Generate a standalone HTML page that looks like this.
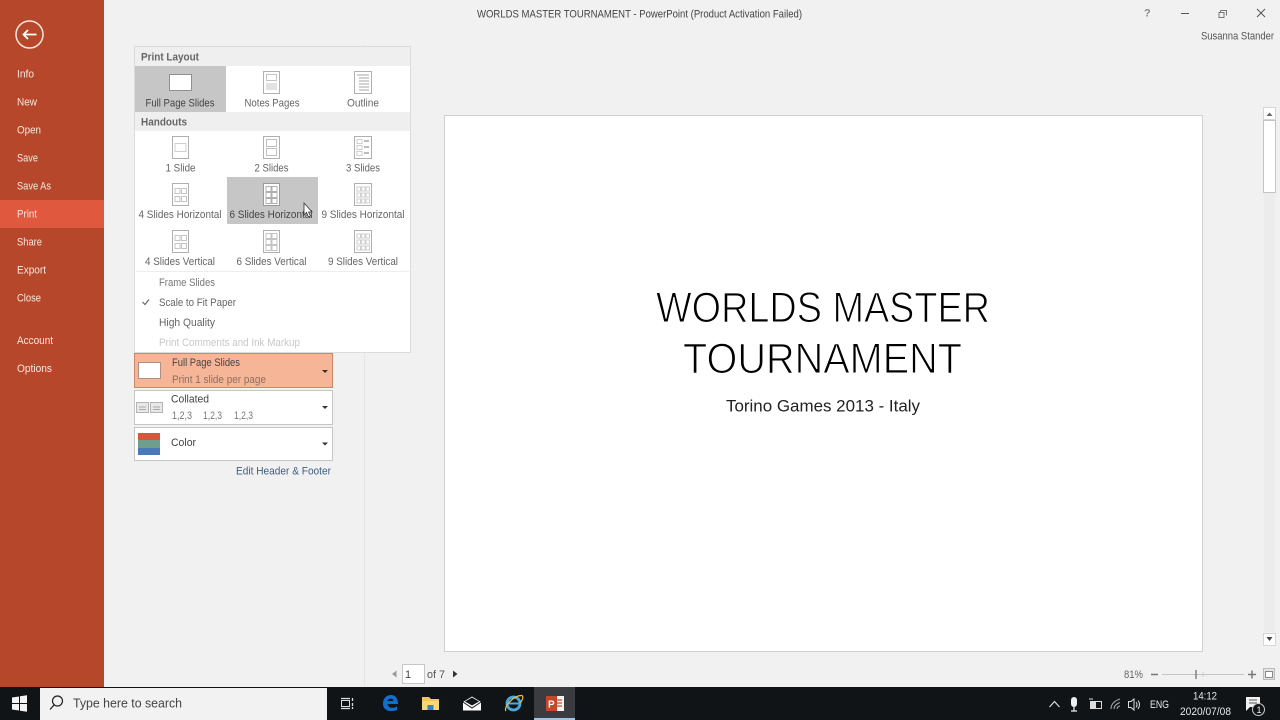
<!DOCTYPE html>
<html><head><meta charset="utf-8"><title>PowerPoint Print</title>
<style>
html,body{margin:0;padding:0;width:1280px;height:720px;overflow:hidden;background:#f1f1f1}
svg{display:block;position:absolute;left:0;top:0;filter:blur(.3px)}
text{font-family:"Liberation Sans",sans-serif;white-space:pre}
.m text{fill:#fbe6df;font-size:11px}
.g text{fill:#666;font-size:11px;text-anchor:middle}
.i rect,.i path{fill:none;stroke:#b0b0b0;stroke-width:1}
.i .w{fill:#fff}
</style></head>
<body>
<svg width="1280" height="720" viewBox="0 0 1280 720" xmlns="http://www.w3.org/2000/svg">
<rect width="1280" height="720" fill="#f1f1f1"/>
<!-- sidebar -->
<rect x="0" y="0" width="104" height="687" fill="#b7472a"/>
<rect x="0" y="200" width="104" height="28" fill="#e0593f"/>
<circle cx="29.500" cy="34.500" r="13.500" fill="none" stroke="#fbe6df" stroke-width="1.500"/>
<path d="M36.500 34.500H23.500M28 30L23.500 34.500L28 39" fill="none" stroke="#fff" stroke-width="1.800"/>
<g class="m">
<text x="17" y="77.500" textLength="17" lengthAdjust="spacingAndGlyphs">Info</text>
<text x="17" y="105.500" textLength="20" lengthAdjust="spacingAndGlyphs">New</text>
<text x="17" y="133.500" textLength="24" lengthAdjust="spacingAndGlyphs">Open</text>
<text x="17" y="161.500" textLength="21" lengthAdjust="spacingAndGlyphs">Save</text>
<text x="17" y="189.500" textLength="34" lengthAdjust="spacingAndGlyphs">Save As</text>
<text x="17" y="217.500" textLength="20" lengthAdjust="spacingAndGlyphs">Print</text>
<text x="17" y="245.500" textLength="25" lengthAdjust="spacingAndGlyphs">Share</text>
<text x="17" y="273.500" textLength="29" lengthAdjust="spacingAndGlyphs">Export</text>
<text x="17" y="301.500" textLength="24" lengthAdjust="spacingAndGlyphs">Close</text>
<text x="17" y="344" textLength="36" lengthAdjust="spacingAndGlyphs">Account</text>
<text x="17" y="372" textLength="35" lengthAdjust="spacingAndGlyphs">Options</text>
</g>
<!-- title bar -->
<text x="477" y="17.500" font-size="11" fill="#444" textLength="325" lengthAdjust="spacingAndGlyphs">WORLDS MASTER TOURNAMENT - PowerPoint (Product Activation Failed)</text>
<text x="1144" y="16.500" font-size="11" font-weight="bold" fill="#888">?</text>
<path d="M1181 13.500H1189" stroke="#555" stroke-width="1"/>
<path d="M1220.500 10.500H1226.500V15.500M1220.500 10.500V12.500M1219 12.500H1224V17.500H1219V12.500Z" fill="none" stroke="#777" stroke-width="1"/>
<path d="M1257 9L1265 17M1265 9L1257 17" stroke="#555" stroke-width="1"/>
<text x="1201" y="39.500" font-size="11" fill="#555" textLength="73" lengthAdjust="spacingAndGlyphs">Susanna Stander</text>
<!-- divider -->
<rect x="364" y="45" width="1" height="642" fill="#e6e6e6"/>
<!-- slide -->
<rect x="444.500" y="115.500" width="758" height="536" fill="#fff" stroke="#d0d0d0"/>
<g fill="#000" stroke="#fff" stroke-width="1.100">
<text x="656" y="322" font-size="43" textLength="334" lengthAdjust="spacingAndGlyphs">WORLDS MASTER</text>
<text x="683" y="373" font-size="43" textLength="279" lengthAdjust="spacingAndGlyphs">TOURNAMENT</text>
</g>
<text x="726" y="411.500" font-size="16.500" fill="#222" textLength="194" lengthAdjust="spacingAndGlyphs">Torino Games 2013 - Italy</text>
<!-- scrollbar -->
<rect x="1263.500" y="107.500" width="12" height="12" fill="#fff" stroke="#d6d6d6"/>
<path d="M1266.500 116L1269.500 112.500L1272.500 116Z" fill="#666"/>
<rect x="1264" y="193" width="11" height="439" fill="#ececec"/>
<rect x="1263.500" y="120.500" width="12" height="72" fill="#fff" stroke="#c4c4c4"/>
<rect x="1263.500" y="633.500" width="12" height="12" fill="#fff" stroke="#d6d6d6"/>
<path d="M1266.500 637L1269.500 641L1272.500 637Z" fill="#444"/>
<!-- print setting rows -->
<rect x="134.500" y="353.500" width="198" height="34" fill="#f6b597" stroke="#d1866a"/>
<rect x="138.500" y="362.500" width="22" height="16" fill="#fff" stroke="#b09080"/>
<text x="172" y="366" font-size="11" fill="#444" textLength="68" lengthAdjust="spacingAndGlyphs">Full Page Slides</text>
<text x="172" y="383" font-size="11" fill="#8c6f62" textLength="94" lengthAdjust="spacingAndGlyphs">Print 1 slide per page</text>
<path d="M322 370H328L325 373Z" fill="#333"/>
<rect x="134.500" y="390.500" width="198" height="34" fill="#fff" stroke="#c6c6c6"/>
<g fill="#e8e8e8" stroke="#b4b4b4" stroke-width="1"><rect x="136.500" y="402.500" width="12" height="10"/><rect x="150.500" y="402.500" width="12" height="10"/></g>
<path d="M139 407H146M139 409.500H146M153 407H160M153 409.500H160" stroke="#aaa"/>
<text x="171" y="402.500" font-size="11" fill="#444" textLength="38" lengthAdjust="spacingAndGlyphs">Collated</text>
<text x="172" y="419" font-size="11" fill="#777" textLength="20" lengthAdjust="spacingAndGlyphs">1,2,3</text>
<text x="203" y="419" font-size="11" fill="#777" textLength="19" lengthAdjust="spacingAndGlyphs">1,2,3</text>
<text x="234" y="419" font-size="11" fill="#777" textLength="19" lengthAdjust="spacingAndGlyphs">1,2,3</text>
<path d="M322 406H328L325 409Z" fill="#333"/>
<rect x="134.500" y="427.500" width="198" height="33" fill="#fff" stroke="#c6c6c6"/>
<rect x="138" y="433" width="22" height="7" fill="#d4583c"/><rect x="138" y="440" width="22" height="8" fill="#6f9f8c"/><rect x="138" y="448" width="22" height="7" fill="#4a78b8"/>
<text x="171" y="446" font-size="11" fill="#444" textLength="25" lengthAdjust="spacingAndGlyphs">Color</text>
<path d="M322 442.500H328L325 445.500Z" fill="#333"/>
<text x="236" y="474.500" font-size="11" fill="#3f5f86" textLength="95" lengthAdjust="spacingAndGlyphs">Edit Header &amp; Footer</text>
<!-- popup -->
<rect x="134.500" y="46.500" width="276" height="306" fill="#fff" stroke="#dcdcdc"/>
<rect x="135" y="47" width="275" height="19" fill="#efefef"/>
<rect x="135" y="112" width="275" height="19" fill="#efefef"/>
<text x="141" y="60.500" font-size="11" font-weight="bold" fill="#666" textLength="58" lengthAdjust="spacingAndGlyphs">Print Layout</text>
<text x="141" y="125.500" font-size="11" font-weight="bold" fill="#666" textLength="46" lengthAdjust="spacingAndGlyphs">Handouts</text>
<rect x="135" y="66" width="91" height="46" fill="#c6c6c6"/>
<rect x="227" y="177" width="91" height="47" fill="#c6c6c6"/>
<g class="i">
<rect class="w" x="169.500" y="74.500" width="22" height="16" style="stroke:#909090"/>
<rect class="w" x="263.500" y="71.500" width="16" height="22"/><rect x="266.500" y="74.500" width="10" height="6" style="stroke:#c4c4c4"/><rect x="266.500" y="83.500" width="10" height="6" style="fill:#e2e2e2;stroke:#e2e2e2"/>
<rect class="w" x="354.500" y="71.500" width="17" height="22"/><path d="M357 75H369M359 78H369M359 81H369M359 84H369M359 87H369M359 90H369" style="stroke:#a4a4a4"/>
<rect class="w" x="172.500" y="136.500" width="16" height="22"/><rect x="175" y="143.500" width="11" height="8" style="stroke:#cfcfcf"/>
<rect class="w" x="263.500" y="136.500" width="16" height="22"/><rect x="266.500" y="139.500" width="10" height="7" style="stroke:#c0c0c0"/><rect x="266.500" y="148.500" width="10" height="7" style="stroke:#c0c0c0"/>
<rect class="w" x="354.500" y="136.500" width="17" height="22"/><path d="M357 139.500h5v4h-5zM357 145.500h5v4h-5zM357 151.500h5v4h-5z" style="stroke:#cfcfcf"/><path d="M364 141H369M364 147H369M364 153H369" style="stroke:#bbb;stroke-width:2"/>
<rect class="w" x="172.500" y="183.500" width="16" height="22"/><path d="M175 188.500h5v5h-5zM181.500 188.500h5v5h-5zM175 196.500h5v5h-5zM181.500 196.500h5v5h-5z" style="stroke:#c4c4c4"/>
<rect class="w" x="263.500" y="183.500" width="16" height="22" style="stroke:#999"/><path d="M266 186.500h5v5h-5zM272 186.500h5v5h-5zM266 192.500h5v5h-5zM272 192.500h5v5h-5zM266 198.500h5v5h-5zM272 198.500h5v5h-5z" style="stroke:#b0b0b0"/>
<rect class="w" x="354.500" y="183.500" width="17" height="22"/><path d="M357 187h3.500v4H357zM361.500 187h3.500v4h-3.500zM366 187h3.500v4H366zM357 193h3.500v4H357zM361.500 193h3.500v4h-3.500zM366 193h3.500v4H366zM357 199h3.500v4H357zM361.500 199h3.500v4h-3.500zM366 199h3.500v4H366z" style="stroke:#cfcfcf"/>
<rect class="w" x="172.500" y="230.500" width="16" height="22"/><path d="M175 235.500h5v5h-5zM181.500 235.500h5v5h-5zM175 243.500h5v5h-5zM181.500 243.500h5v5h-5z" style="stroke:#c4c4c4"/>
<rect class="w" x="263.500" y="230.500" width="16" height="22"/><path d="M266 233.500h5v5h-5zM272 233.500h5v5h-5zM266 239.500h5v5h-5zM272 239.500h5v5h-5zM266 245.500h5v5h-5zM272 245.500h5v5h-5z" style="stroke:#c4c4c4"/>
<rect class="w" x="354.500" y="230.500" width="17" height="22"/><path d="M357 234h3.500v4H357zM361.500 234h3.500v4h-3.500zM366 234h3.500v4H366zM357 240h3.500v4H357zM361.500 240h3.500v4h-3.500zM366 240h3.500v4H366zM357 246h3.500v4H357zM361.500 246h3.500v4h-3.500zM366 246h3.500v4H366z" style="stroke:#cfcfcf"/>
</g>
<g class="g">
<text x="180" y="106.500" textLength="69" lengthAdjust="spacingAndGlyphs" style="fill:#444">Full Page Slides</text>
<text x="272" y="106.500" textLength="55" lengthAdjust="spacingAndGlyphs">Notes Pages</text>
<text x="363" y="106.500" textLength="32" lengthAdjust="spacingAndGlyphs">Outline</text>
<text x="180.500" y="171.500" textLength="30" lengthAdjust="spacingAndGlyphs">1 Slide</text>
<text x="271.500" y="171.500" textLength="34" lengthAdjust="spacingAndGlyphs">2 Slides</text>
<text x="363" y="171.500" textLength="34" lengthAdjust="spacingAndGlyphs">3 Slides</text>
<text x="180" y="218" textLength="83" lengthAdjust="spacingAndGlyphs">4 Slides Horizontal</text>
<text x="271" y="218" textLength="83" lengthAdjust="spacingAndGlyphs" style="fill:#444">6 Slides Horizontal</text>
<text x="363" y="218" textLength="83" lengthAdjust="spacingAndGlyphs">9 Slides Horizontal</text>
<text x="180" y="265" textLength="70" lengthAdjust="spacingAndGlyphs">4 Slides Vertical</text>
<text x="271.500" y="265" textLength="70" lengthAdjust="spacingAndGlyphs">6 Slides Vertical</text>
<text x="363" y="265" textLength="70" lengthAdjust="spacingAndGlyphs">9 Slides Vertical</text>
</g>
<rect x="136" y="271" width="273" height="1" fill="#eeeeee"/>
<g font-size="11">
<text x="159" y="286" fill="#777" textLength="56" lengthAdjust="spacingAndGlyphs">Frame Slides</text>
<text x="159" y="306" fill="#666" textLength="77" lengthAdjust="spacingAndGlyphs">Scale to Fit Paper</text>
<text x="159" y="326" fill="#666" textLength="56" lengthAdjust="spacingAndGlyphs">High Quality</text>
<text x="159" y="346" fill="#c8c8c8" textLength="141" lengthAdjust="spacingAndGlyphs">Print Comments and Ink Markup</text>
</g>
<path d="M142.500 302L145 304.500L149 299.500" fill="none" stroke="#666" stroke-width="1.200"/>
<!-- cursor -->
<path d="M304 203V215L306.500 212.500L308.500 217L310.500 216L308.500 212H312Z" fill="#fff" stroke="#333" stroke-width=".8"/>
<!-- page nav -->
<path d="M396.500 670.500V677.500L392 674Z" fill="#999"/>
<rect x="402.500" y="664.500" width="22" height="19" fill="#fff" stroke="#c6c6c6"/>
<text x="405" y="678" font-size="11" fill="#444">1</text>
<text x="427" y="678" font-size="11" fill="#555" textLength="18" lengthAdjust="spacingAndGlyphs">of 7</text>
<path d="M453 670.500V677.500L457.500 674Z" fill="#333"/>
<!-- zoom -->
<text x="1124" y="678" font-size="11" fill="#666" textLength="19" lengthAdjust="spacingAndGlyphs">81%</text>
<path d="M1151 674.500H1158" stroke="#777" stroke-width="1.500"/>
<path d="M1162 674.500H1244" stroke="#c4c4c4"/>
<path d="M1196 670V679" stroke="#666" stroke-width="1.200"/>
<path d="M1203 672V677" stroke="#ccc"/>
<path d="M1248 674.500H1256M1252 670.500V678.500" stroke="#777" stroke-width="1.500"/>
<rect x="1263.500" y="668.500" width="11" height="11" fill="#e4e4e4" stroke="#bbb"/>
<rect x="1265.500" y="671.500" width="7" height="6" fill="#fff" stroke="#888"/>
<!-- taskbar -->
<rect x="0" y="687" width="1280" height="33" fill="#111417"/>
<path d="M12 697.500L19 696.500V703H12ZM20 696.300L27 695.300V703H20ZM12 704H19V710.500L12 709.500ZM20 704H27V711.700L20 710.700Z" fill="#f4f4f4"/>
<rect x="40" y="688" width="287" height="32" fill="#f2f2f2"/>
<circle cx="57.500" cy="701" r="5" fill="none" stroke="#222" stroke-width="1.200"/>
<path d="M54 705L50 709.500" stroke="#222" stroke-width="1.300"/>
<text x="73" y="707.500" font-size="13" fill="#444" textLength="109" lengthAdjust="spacingAndGlyphs">Type here to search</text>
<!-- task view -->
<path d="M341 698.500H350M341 708.500H350" stroke="#ddd" stroke-width="1.300"/>
<rect x="341.500" y="700.500" width="8" height="6" fill="none" stroke="#ddd"/>
<path d="M352.500 698V701M352.500 703V706M352.500 707V709" stroke="#ddd" stroke-width="1.300"/>
<!-- edge -->
<path d="M383 704C383 697 388 695 391 695C395 695 398 698 398 704H387.500C388 708 393 709 397 706.500V710C391 712.500 383 711 383 704ZM387.500 701H393.500C393.500 698 388 698 387.500 701Z" fill="#0f6fd0"/>
<!-- folder -->
<path d="M422 697H429L431 699H439V710H422Z" fill="#f3c65c"/>
<rect x="422" y="701" width="17" height="9" fill="#f9d777"/>
<rect x="427.500" y="705" width="6" height="5" fill="#3b82c4"/>
<!-- mail -->
<path d="M463 702L472 696.500L481 702V710.500H463Z" fill="#fff"/>
<path d="M465 701.500L472 705.500L479 701.500L472 697.500Z" fill="#111417"/>
<path d="M463 702L472 708L481 702" fill="none" stroke="#111417" stroke-width="1"/>
<!-- IE -->
<circle cx="513.500" cy="703.500" r="6.500" fill="none" stroke="#4aa7e0" stroke-width="2.800"/>
<path d="M508 703.500H520" stroke="#4aa7e0" stroke-width="2"/>
<path d="M506 711C503 707 514 695 522 695.500C524 697 522 701 520 703" fill="none" stroke="#e8c33a" stroke-width="1.200"/>
<!-- ppt -->
<rect x="534" y="687" width="41" height="33" fill="#3a3c3f"/>
<rect x="534" y="718" width="41" height="2" fill="#9cc4e8"/>
<rect x="553" y="696" width="11" height="15" fill="#f3f3f3"/>
<path d="M556 700H562M556 703H562M556 706H562" stroke="#d24726" stroke-width="1.200"/>
<rect x="546" y="696" width="11" height="15" fill="#c8452a"/>
<text x="548" y="707.500" font-size="10" font-weight="bold" fill="#fff">P</text>
<!-- tray -->
<path d="M1049.500 707L1054.500 701.500L1059.500 707" fill="none" stroke="#ddd" stroke-width="1.200"/>
<rect x="1071" y="697" width="6" height="10" rx="3" fill="#eee"/>
<path d="M1074 707V711M1071 711H1077" stroke="#eee" stroke-width="1.200"/>
<rect x="1090.500" y="701.500" width="11" height="7" fill="none" stroke="#ddd"/>
<rect x="1091" y="702" width="5" height="6" fill="#ddd"/>
<path d="M1089 699H1093" stroke="#ddd"/>
<path d="M1111 709C1111 704 1114 701 1120 699M1114 709C1114 706 1116 704 1120 702.500M1117 709C1117 707.500 1118 706.500 1120 706" fill="none" stroke="#aaa"/>
<path d="M1128.500 701.500H1131L1134 699V710L1131 707.500H1128.500Z" fill="none" stroke="#ddd"/>
<path d="M1136 702C1137.500 704 1137.500 705.500 1136 707.500M1138 700.500C1140 703 1140 706 1138 709" fill="none" stroke="#ddd"/>
<text x="1150" y="708" font-size="11" fill="#e6e6e6" textLength="19" lengthAdjust="spacingAndGlyphs">ENG</text>
<text x="1193" y="699.500" font-size="11" fill="#e6e6e6" textLength="24" lengthAdjust="spacingAndGlyphs">14:12</text>
<text x="1180" y="715" font-size="11" fill="#e6e6e6" textLength="51" lengthAdjust="spacingAndGlyphs">2020/07/08</text>
<path d="M1246 697H1260V707H1250L1246 711Z" fill="#f2f2f2"/>
<path d="M1249 700H1257M1249 703H1257" stroke="#555"/>
<circle cx="1258.500" cy="709.500" r="6" fill="#111417" stroke="#ccc"/>
<text x="1256.500" y="713" font-size="9" fill="#eee">1</text>
</svg>
</body></html>
